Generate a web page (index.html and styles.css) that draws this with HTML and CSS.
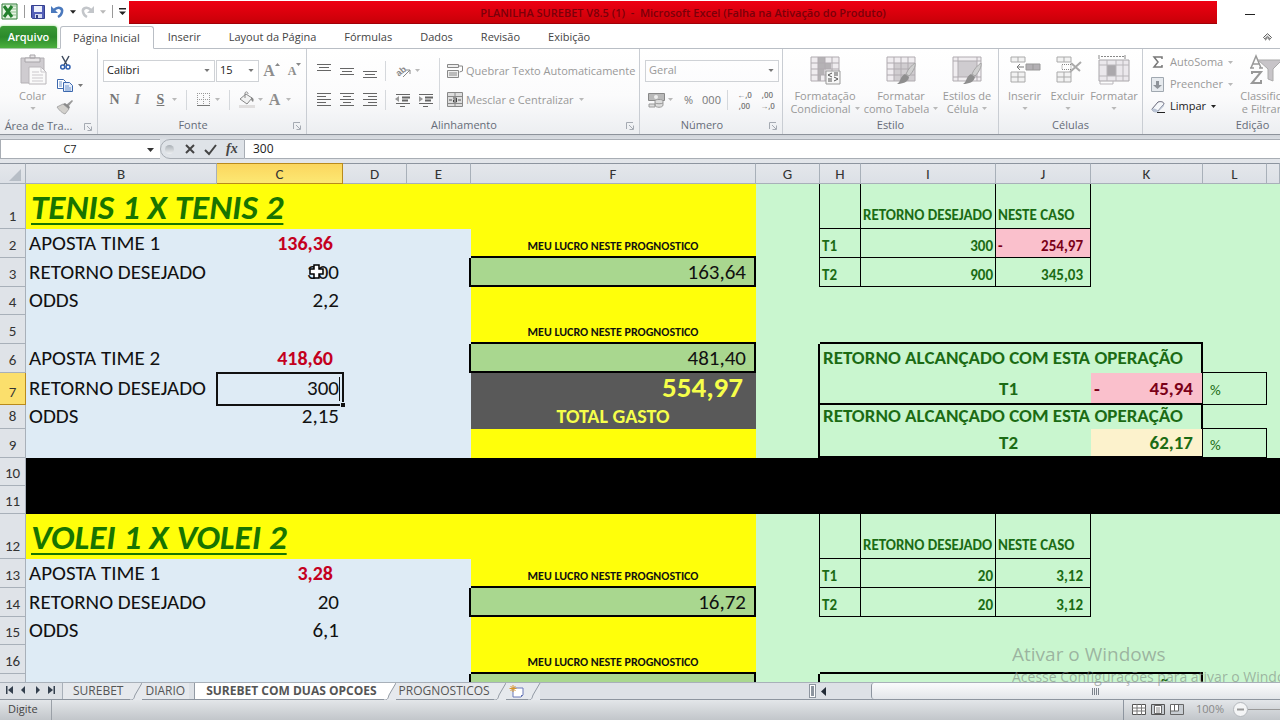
FILE: index.html
```html
<!DOCTYPE html>
<html lang="pt-BR">
<head>
<meta charset="utf-8">
<title>PLANILHA SUREBET V8.5 (1) - Microsoft Excel</title>
<link rel="stylesheet" href="styles.css">
</head>
<body>
<svg class="sprite" aria-hidden="true">
  <symbol id="arrow" viewBox="0 0 7 4"><path d="M0 0h7L3.500 4z" fill="currentColor"/></symbol>
  <symbol id="launch" viewBox="0 0 8 8"><path d="M.5 7V.5H7M3 3l4 4M7.500 3.500v4h-4" fill="none" stroke="#a5aab2"/></symbol>
  <symbol id="grid" viewBox="0 0 30 30"><path d="M1 2h28v24H1z" fill="#efecef"/><path d="M8 2h7v6h6v6h-7v6h-3v6H8z" fill="#b5b2b5"/><path d="M1 2h28v24H1zM1 8h28M1 14h28M1 20h28M8 2v24M15 2v24M22 2v24" fill="none" stroke="#b0abb0"/></symbol>
  <symbol id="brush" viewBox="0 0 20 22"><path d="M19 0c1 3-2 9-6 13l-3-2C12 6 16 2 19 0z" fill="#cfcfcf" stroke="#a5a5a5"/><path d="M9 11l4 3c-1 5-6 7-12 7 4-2 3-8 8-10z" fill="#8e8e8e"/></symbol>
</svg>

<header class="titlebar">
  <div class="quick">
    <svg class="xl" width="17" height="17" viewBox="0 0 17 17"><path d="M1 1h15v15H1z" fill="#e9f5e6" stroke="#2f7d36"/><path d="M9 3h6M9 6h6M9 9h6M9 12h6" stroke="#8cbd8c"/><path d="M3 3l8 11M11 3L3 14" stroke="#23802d" stroke-width="3"/></svg>
    <i class="vbar"></i>
    <button class="q-save" aria-label="Salvar"><svg width="14" height="14" viewBox="0 0 14 14"><path d="M.5.5h13v13h-12l-1-1z" fill="#5460b8" stroke="#35408f"/><path d="M3 1h8v6H3z" fill="#eef1fb"/><path d="M4 9h7v4H4z" fill="#d5daf0"/><path d="M5 10h2v3H5z" fill="#333e82"/></svg></button>
    <button class="q-undo" aria-label="Desfazer"><svg width="13" height="13" viewBox="0 0 13 13"><path d="M3 5c4-4 9-2 8 2-.5 2.500-2 4-4 5" fill="none" stroke="#4b79bd" stroke-width="2.500"/><path d="M0 1v7h7z" fill="#4b79bd"/></svg></button>
    <svg class="dark" width="6" height="4"><use href="#arrow"/></svg>
    <button class="q-redo" aria-label="Refazer"><svg width="13" height="13" viewBox="0 0 13 13"><path d="M10 5C6 1 1 3 2 7c.5 2.500 2 4 4 5" fill="none" stroke="#c3c6ca" stroke-width="2.500"/><path d="M13 1v7H6z" fill="#c3c6ca"/></svg></button>
    <svg class="pale" width="6" height="4"><use href="#arrow"/></svg>
    <i class="vbar"></i>
    <svg class="dark" width="7" height="8" viewBox="0 0 7 8"><path d="M0 0h7v1.500H0zM0 3.500h7L3.500 7z" fill="currentColor"/></svg>
  </div>
  <h1 class="caption">PLANILHA SUREBET V8.5 (1)&nbsp; -&nbsp; Microsoft Excel (Falha na Ativação do Produto)</h1>
  <button class="minimize" aria-label="Minimizar"><svg width="10" height="2"><path d="M0 0h10v1H0z" fill="#222"/></svg></button>
</header>

<nav class="tabs">
  <button class="file">Arquivo</button>
  <button class="tab current">Página Inicial</button>
  <button class="tab">Inserir</button>
  <button class="tab">Layout da Página</button>
  <button class="tab">Fórmulas</button>
  <button class="tab">Dados</button>
  <button class="tab">Revisão</button>
  <button class="tab">Exibição</button>
  <button class="collapse" aria-label="Minimizar a Faixa de Opções"><svg width="9" height="8" viewBox="0 0 9 8"><path d="M.5 4.500L4.500.7l4 3.800-1.300 1.300-2.700-2.500-2.700 2.500zM2 7.300l2.500-2.400L7 7.300" fill="none" stroke="#555"/></svg></button>
</nav>

<section class="ribbon">
  <div class="group g-clip">
    <div class="body">
      <button class="big b-paste"><svg width="30" height="30" viewBox="0 0 30 30"><path d="M3 3h23v25H3z" fill="#cfccd0" stroke="#b3b0b4"/><path d="M7 3h15v4H7zM12 0h5v3h-5z" fill="#e8e6e8" stroke="#a7a4a8"/><path d="M11 12h12l5 5v12H11z" fill="#fafafa" stroke="#b9b6ba"/><path d="M23 12v5h5M14 17h7M14 20h11M14 23h11M14 26h11" fill="none" stroke="#cbc8cc"/></svg><span>Colar</span><svg class="pale" width="6" height="3"><use href="#arrow"/></svg></button>
      <div class="stack">
        <button class="mini" aria-label="Recortar"><svg width="16" height="14" viewBox="0 0 16 14"><path d="M5 0l5 9M12 0L7 9" stroke="#3d4a5e" stroke-width="1.500"/><circle cx="5.700" cy="11" r="2" fill="none" stroke="#2f5fae" stroke-width="1.500"/><circle cx="11" cy="11" r="2" fill="none" stroke="#2f5fae" stroke-width="1.500"/></svg></button>
        <button class="mini" aria-label="Copiar"><svg width="16" height="13" viewBox="0 0 16 13"><path d="M.5.5h6l2 2v7h-8z" fill="#fff" stroke="#3c68ae"/><path d="M6.500 3.500h6l3 3v6h-9z" fill="#e6eefb" stroke="#3c68ae"/><path d="M2 3h3M2 5h3M2 7h3M8 7h4M8 9h6M8 11h6" stroke="#6d93cc"/></svg><svg class="mid" width="5" height="3"><use href="#arrow"/></svg></button>
        <button class="mini" aria-label="Pincel de Formatação"><svg width="16" height="14" viewBox="0 0 16 14"><path d="M15 0l1 1-5 6-2-2z" fill="#999"/><path d="M6 4l6 5-4 5C5 13 2 10 0 7z" fill="#d2d0cc" stroke="#aaa"/><path d="M6 4l6 5 1-2-5-4z" fill="#888"/></svg></button>
      </div>
    </div>
    <h2>Área de Tra...<svg width="8" height="8"><use href="#launch"/></svg></h2>
  </div>

  <div class="group g-font">
    <div class="body rows">
      <div class="line">
        <label class="pick p-font"><select aria-label="Fonte"><option>Calibri</option></select><svg class="mid" width="6" height="3"><use href="#arrow"/></svg></label>
        <label class="pick p-size"><select aria-label="Tamanho"><option>15</option></select><svg class="mid" width="6" height="3"><use href="#arrow"/></svg></label>
        <button class="cell serif">A<svg width="5" height="3" viewBox="0 0 5 3"><path d="M0 3h5L2.500 0z" fill="#888"/></svg></button>
        <button class="cell serif small">A<svg width="5" height="3" viewBox="0 0 5 3"><path d="M0 0h5L2.500 3z" fill="#888"/></svg></button>
      </div>
      <div class="line">
        <button class="cell serif bold">N</button>
        <button class="cell serif ital">I</button>
        <button class="cell serif under">S</button>
        <svg class="pale" width="5" height="3"><use href="#arrow"/></svg>
        <i class="sep spaced"></i>
        <button class="cell" aria-label="Bordas"><svg width="13" height="13" viewBox="0 0 13 13"><path d="M.5 0v12M6.500 0v12M12.500 0v12M0 .5h12M0 6.500h12" stroke="#999" stroke-dasharray="1 1"/><path d="M0 12.500h13" stroke="#777"/></svg></button>
        <svg class="pale" width="5" height="3"><use href="#arrow"/></svg>
        <i class="sep spaced"></i>
        <button class="cell" aria-label="Cor de Preenchimento"><svg width="16" height="16" viewBox="0 0 16 16"><path d="M1 7l6-5 6 4-5 6z" fill="#f2f2f2" stroke="#888"/><path d="M6 6V1c1-2 3-1 3 1" fill="none" stroke="#888"/><path d="M12 5c3 1 3 3 2 5-2-1-2-3-2-5z" fill="#888"/><path d="M0 13h16v3H0z" fill="#e0dede"/></svg></button>
        <svg class="pale" width="5" height="3"><use href="#arrow"/></svg>
        <button class="cell serif">A</button>
        <svg class="pale" width="5" height="3"><use href="#arrow"/></svg>
      </div>
    </div>
    <h2>Fonte<svg width="8" height="8"><use href="#launch"/></svg></h2>
  </div>

  <div class="group g-align">
    <div class="body">
      <div class="rows left">
        <div class="line">
          <button class="cell" aria-label="Alinhar em Cima"><svg width="14" height="14" viewBox="0 0 14 14"><path d="M0 .5h14M2 3.500h10M0 6.500h14" stroke="#666"/></svg></button>
          <button class="cell" aria-label="Alinhar no Meio"><svg width="14" height="14" viewBox="0 0 14 14"><path d="M0 4.500h14M2 7.500h10M0 10.500h14" stroke="#666"/></svg></button>
          <button class="cell" aria-label="Alinhar Embaixo"><svg width="14" height="14" viewBox="0 0 14 14"><path d="M0 7.500h14M2 10.500h10M0 13.500h14" stroke="#666"/></svg></button>
          <i class="sep"></i>
          <button class="cell wide" aria-label="Orientação"><svg width="16" height="14" viewBox="0 0 16 14"><text x="0" y="11" transform="rotate(-40 4 8)" class="ab">ab</text><path d="M7 13l7-7M14 10V6h-4" fill="none" stroke="#888"/></svg><svg class="pale" width="5" height="3"><use href="#arrow"/></svg></button>
        </div>
        <div class="line">
          <button class="cell" aria-label="Esquerda"><svg width="14" height="13" viewBox="0 0 14 13"><path d="M0 .5h14M0 3.500h9M0 6.500h14M0 9.500h9M0 12.500h14" stroke="#666"/></svg></button>
          <button class="cell" aria-label="Centralizar"><svg width="14" height="13" viewBox="0 0 14 13"><path d="M0 .5h14M3 3.500h8M0 6.500h14M3 9.500h8M0 12.500h14" stroke="#666"/></svg></button>
          <button class="cell" aria-label="Direita"><svg width="14" height="13" viewBox="0 0 14 13"><path d="M0 .5h14M5 3.500h9M0 6.500h14M5 9.500h9M0 12.500h14" stroke="#666"/></svg></button>
          <i class="sep"></i>
          <button class="cell" aria-label="Diminuir Recuo"><svg width="16" height="14" viewBox="0 0 16 14"><path d="M1 1.500h14M7 4.500h8M7 7.500h6M1 10.500h14M5 13.500h5" stroke="#666"/><path d="M7 4.500h8M7 7.500h6" stroke="#666" stroke-width="2"/><path d="M0 6l4-3v6z" fill="#999"/></svg></button>
          <button class="cell" aria-label="Aumentar Recuo"><svg width="16" height="14" viewBox="0 0 16 14"><path d="M1 1.500h14M1 10.500h14M5 13.500h5" stroke="#666"/><path d="M7 4.500h8M7 7.500h6" stroke="#666" stroke-width="2"/><path d="M5 6L1 3v6z" fill="#999"/></svg></button>
        </div>
      </div>
      <i class="sep tall"></i>
      <div class="rows">
        <button class="line text"><svg width="16" height="15" viewBox="0 0 16 15"><path d="M.5 1.500h11v3H.5zM.5 7.500h11v7H.5z" fill="#eee" stroke="#888"/><path d="M2 10h8M2 12h8M12 3h3.500v5l-3 1" fill="none" stroke="#888"/></svg>Quebrar Texto Automaticamente</button>
        <button class="line text"><svg width="16" height="15" viewBox="0 0 16 15"><path d="M.5.5h15v14H.5z" fill="#ddd" stroke="#888"/><path d="M1 4.500h15M1 11.500h15M8 0v4M8 11v4" stroke="#888"/><path d="M2 8h3M11 8h3" stroke="#555"/><path d="M6 6h3.500v4H6.500V8h3" fill="none" stroke="#444"/></svg>Mesclar e Centralizar<svg class="pale gapl" width="5" height="3"><use href="#arrow"/></svg></button>
      </div>
    </div>
    <h2>Alinhamento<svg width="8" height="8"><use href="#launch"/></svg></h2>
  </div>

  <div class="group g-num">
    <div class="body rows">
      <div class="line"><label class="pick p-num"><select aria-label="Formato de Número"><option>Geral</option></select><svg class="mid" width="6" height="3"><use href="#arrow"/></svg></label></div>
      <div class="line">
        <button class="cell" aria-label="Moeda"><svg width="17" height="16" viewBox="0 0 17 16"><path d="M.5 1.500h16v7H.5z" fill="#b9b9b9" stroke="#888"/><circle cx="8" cy="5" r="2" fill="#eee"/><path d="M7 9c0-2 8-2 8 0v4c0 3-8 3-8 0zM1 12h6v3H1z" fill="#ddd" stroke="#999"/><path d="M7 11c2 1 6 1 8 0" fill="none" stroke="#999"/></svg></button>
        <svg class="pale" width="5" height="3"><use href="#arrow"/></svg>
        <button class="cell fmt first">%</button>
        <button class="cell fmt">000</button>
        <i class="sep"></i>
        <button class="cell dec"><span>←,0</span><span>,00</span></button>
        <button class="cell dec"><span>,00</span><span>→,0</span></button>
      </div>
    </div>
    <h2>Número<svg width="8" height="8"><use href="#launch"/></svg></h2>
  </div>

  <div class="group g-style">
    <div class="body">
      <button class="big b-cond"><svg width="30" height="30" viewBox="0 0 30 30"><use href="#grid"/><path d="M16 16h14v13H16z" fill="#f7f7f7" stroke="#999"/><path d="M22 18l-4 2 4 2M18 24h4M18 26h4M24 18h4M24 20h4M24 22l4 2-4 2" fill="none" stroke="#555"/></svg><span>Formatação</span><span>Condicional<svg class="pale gapl" width="5" height="3"><use href="#arrow"/></svg></span></button>
      <button class="big b-table"><svg width="30" height="30" viewBox="0 0 30 30"><path d="M1 2h28v24H1z" fill="#f0edf0"/><path d="M8 8h21v18H8z" fill="#d0cdd0"/><path d="M1 2h28v24H1zM1 8h28M1 14h28M1 20h28M8 2v24M15 2v24M22 2v24" fill="none" stroke="#b0abb0"/><use href="#brush" x="10" y="8" width="20" height="22"/></svg><span>Formatar</span><span>como Tabela<svg class="pale gapl" width="5" height="3"><use href="#arrow"/></svg></span></button>
      <button class="big b-cstyle"><svg width="30" height="30" viewBox="0 0 30 30"><path d="M1 2h28v24H1z" fill="#f0edf0" stroke="#b0abb0"/><path d="M6 6h19v16H6z" fill="#cfccd0"/><path d="M1 6h28M1 22h28M6 2v24M25 2v24" stroke="#b0abb0"/><use href="#brush" x="10" y="8" width="20" height="22"/></svg><span>Estilos de</span><span>Célula<svg class="pale gapl" width="5" height="3"><use href="#arrow"/></svg></span></button>
    </div>
    <h2>Estilo</h2>
  </div>

  <div class="group g-cells">
    <div class="body">
      <button class="big"><svg width="30" height="30" viewBox="0 0 30 30"><path d="M1 2h14v5H1zM8 2v5M1 17h14v10H1zM1 22h14M8 17v10" fill="#f2f2f2" stroke="#aaa"/><path d="M16 9h14v6H16zM23 9v6" fill="#b3b0b4" stroke="#999"/><path d="M7 12h7M10 9l-3 3 3 3" fill="none" stroke="#777"/></svg><span>Inserir</span><svg class="pale" width="6" height="3"><use href="#arrow"/></svg></button>
      <button class="big"><svg width="30" height="30" viewBox="0 0 30 30"><path d="M4 2h14v5H4zM11 2v5M4 17h14v10H4zM4 22h14M11 17v10" fill="#f2f2f2" stroke="#aaa"/><path d="M9 9.500h9v5H9z" fill="none" stroke="#888" stroke-dasharray="1 1"/><path d="M18 8l9 8M28 7L17 17" stroke="#aaa" stroke-width="2"/></svg><span>Excluir</span><svg class="pale" width="6" height="3"><use href="#arrow"/></svg></button>
      <button class="big b-format"><svg width="32" height="30" viewBox="0 0 32 30"><path d="M1 0v4M27 0v4" stroke="#888"/><path d="M3 1.500h23" stroke="#888" stroke-dasharray="2 1"/><path d="M1 5h30v21H1z" fill="#ebe8ec" stroke="#a9a6aa"/><path d="M9 10h9v11H9z" fill="#aba8ac"/><path d="M1 10h30M1 21h30M9 5v21M18 5v21M25 5v21M2 26v3h13v-3" fill="none" stroke="#b9b6ba"/></svg><span>Formatar</span><svg class="pale" width="6" height="3"><use href="#arrow"/></svg></button>
    </div>
    <h2>Células</h2>
  </div>

  <div class="group g-edit">
    <div class="body">
      <div class="tools">
        <button class="tool"><svg width="14" height="14" viewBox="0 0 14 14"><path d="M11 4V2H3l4 5-4 5h8v-2" fill="none" stroke="#777" stroke-width="1.500"/></svg>AutoSoma<svg class="pale gapl" width="5" height="3"><use href="#arrow"/></svg></button>
        <button class="tool"><svg width="14" height="15" viewBox="0 0 14 15"><path d="M.5.5h12v14H.5z" fill="#e6eaee" stroke="#a0a8b0"/><path d="M5 4h3v4h3l-4.500 4L2 8h3z" fill="#8e9399"/></svg>Preencher<svg class="pale gapl" width="5" height="3"><use href="#arrow"/></svg></button>
        <button class="tool on"><svg width="14" height="13" viewBox="0 0 14 13"><path d="M1 9l6-7c3-1 6 0 6 2l-6 7c-3 1-6 0-6-2z" fill="#f5f7fa" stroke="#667"/><path d="M1 9c2-1 5 0 6 2l6-7v2l-6 6c-3 1-6 0-6-3z" fill="#b9c3d4"/><path d="M6 12.500h8" stroke="#222"/></svg>Limpar<svg class="gapl" width="5" height="3"><use href="#arrow"/></svg></button>
      </div>
      <button class="big b-sort"><svg width="34" height="30" viewBox="0 0 34 30"><path d="M2 13L7 1l5 12M4 9h6M1 13h4M10 13h4" fill="none" stroke="#999" stroke-width="1.500"/><path d="M3 19v-2h9L3 28h9v-3" fill="none" stroke="#999" stroke-width="2"/><path d="M9 5h24L24 14v12l-5-2V14z" fill="#c7c4c8" stroke="#aaa"/></svg><span>Classificar</span><span>e Filtrar<svg class="pale gapl" width="5" height="3"><use href="#arrow"/></svg></span></button>
    </div>
    <h2>Edição</h2>
  </div>
</section>

<section class="formula">
  <label class="namebox"><input value="C7" aria-label="Caixa de Nome"><svg width="7" height="4"><use href="#arrow"/></svg></label>
  <div class="fx">
    <i class="knob"></i>
    <button aria-label="Cancelar"><svg width="10" height="10" viewBox="0 0 10 10"><path d="M1 1l8 8M9 1L1 9" stroke="#444" stroke-width="2"/></svg></button>
    <button aria-label="Inserir"><svg width="13" height="11" viewBox="0 0 13 11"><path d="M1 6l4 4 7-9" fill="none" stroke="#444" stroke-width="2"/></svg></button>
    <button class="fn"><span>fx</span></button>
  </div>
  <input class="entry" value="300" aria-label="Barra de Fórmulas">
</section>

<main class="sheet">
  <table>
    <colgroup><col class="c0"><col class="cB"><col class="cC"><col class="cD"><col class="cD"><col class="cF"><col class="cD"><col class="cH"><col class="cI"><col class="cJ"><col class="cK"><col class="cD"><col></colgroup>
    <thead><tr><th class="corner"><svg width="12" height="12" viewBox="0 0 12 12"><path d="M12 0v12H0z" fill="#b7bec6"/></svg></th><th>B</th><th class="hot">C</th><th>D</th><th>E</th><th>F</th><th>G</th><th>H</th><th>I</th><th>J</th><th>K</th><th>L</th><th></th></tr></thead>
    <tbody>
      <tr class="h45"><th>1</th><td colspan="5" class="y title">TENIS 1 X TENIS 2</td><td class="r1"></td><td class="r1 b1"></td><td class="r1 b1 s">RETORNO DESEJADO</td><td class="r1 b1 s">NESTE CASO</td><td></td><td></td><td></td></tr>
      <tr class="h29"><th>2</th><td class="a">APOSTA TIME 1</td><td class="a red">136,36</td><td class="a"></td><td class="a"></td><td class="y b2 luc">MEU LUCRO NESTE PROGNOSTICO</td><td class="r1"></td><td class="r1 b1 s">T1</td><td class="r1 b1 s num">300</td><td class="r1 b1 s acc neg"><div><span>-</span><span>254,97</span></div></td><td></td><td></td><td></td></tr>
      <tr class="h29"><th>3</th><td class="a">RETORNO DESEJADO</td><td class="a val cursor">300<svg width="15" height="15" viewBox="0 0 15 15"><path d="M5 1h5v4h4v5h-4v4H5v-4H1V5h4z" fill="#fff" stroke="#000" stroke-width="1.500"/></svg></td><td class="a"></td><td class="a r2"></td><td class="gr">163,64</td><td class="r1"></td><td class="r1 b1 s">T2</td><td class="r1 b1 s num">900</td><td class="r1 b1 s acc"><div><span></span><span>345,03</span></div></td><td></td><td></td><td></td></tr>
      <tr class="h28"><th>4</th><td class="a">ODDS</td><td class="a val">2,2</td><td class="a"></td><td class="a"></td><td class="y"></td><td></td><td></td><td></td><td></td><td></td><td></td><td></td></tr>
      <tr class="h29"><th>5</th><td class="a"></td><td class="a"></td><td class="a"></td><td class="a"></td><td class="y b2 luc">MEU LUCRO NESTE PROGNOSTICO</td><td></td><td colspan="4" class="b2"></td><td></td><td></td></tr>
      <tr class="h29"><th>6</th><td class="a">APOSTA TIME 2</td><td class="a red">418,60</td><td class="a"></td><td class="a r2"></td><td class="gr">481,40</td><td class="r2"></td><td colspan="4" class="r2 ret">RETORNO ALCANÇADO COM ESTA OPERAÇÃO</td><td class="b1"></td><td></td></tr>
      <tr class="h32"><th class="hot">7</th><td class="a">RETORNO DESEJADO</td><td class="a edit"><input value="300" aria-label="C7"><i class="caret"></i><i class="handle"></i></td><td class="a"></td><td class="a"></td><td class="total sum">554,97</td><td class="r2"></td><td class="b2"></td><td class="b2"></td><td class="b2 ret">T1</td><td class="r1 b2 ret acc neg"><div><span>-</span><span>45,94</span></div></td><td class="r1 b1 pct">%</td><td></td></tr>
      <tr class="h24"><th>8</th><td class="a">ODDS</td><td class="a val">2,15</td><td class="a"></td><td class="a"></td><td class="total">TOTAL GASTO</td><td class="r2"></td><td colspan="4" class="r2 ret">RETORNO ALCANÇADO COM ESTA OPERAÇÃO</td><td class="b1"></td><td></td></tr>
      <tr class="h29"><th>9</th><td class="a"></td><td class="a"></td><td class="a"></td><td class="a"></td><td class="y"></td><td class="r2"></td><td class="b2"></td><td class="b2"></td><td class="b2 ret">T2</td><td class="r1 b2 ret acc cream"><div><span></span><span>62,17</span></div></td><td class="r1 b1 pct">%</td><td></td></tr>
      <tr class="h28"><th>10</th><td colspan="12" class="k"></td></tr>
      <tr class="h28"><th>11</th><td colspan="12" class="k"></td></tr>
      <tr class="h45"><th>12</th><td colspan="5" class="y title">VOLEI 1 X VOLEI 2</td><td class="r1"></td><td class="r1 b1"></td><td class="r1 b1 s">RETORNO DESEJADO</td><td class="r1 b1 s">NESTE CASO</td><td></td><td></td><td></td></tr>
      <tr class="h29"><th>13</th><td class="a">APOSTA TIME 1</td><td class="a red">3,28</td><td class="a"></td><td class="a"></td><td class="y b2 luc">MEU LUCRO NESTE PROGNOSTICO</td><td class="r1"></td><td class="r1 b1 s">T1</td><td class="r1 b1 s num">20</td><td class="r1 b1 s acc"><div><span></span><span>3,12</span></div></td><td></td><td></td><td></td></tr>
      <tr class="h29"><th>14</th><td class="a">RETORNO DESEJADO</td><td class="a val">20</td><td class="a"></td><td class="a r2"></td><td class="gr">16,72</td><td class="r1"></td><td class="r1 b1 s">T2</td><td class="r1 b1 s num">20</td><td class="r1 b1 s acc"><div><span></span><span>3,12</span></div></td><td></td><td></td><td></td></tr>
      <tr class="h28"><th>15</th><td class="a">ODDS</td><td class="a val">6,1</td><td class="a"></td><td class="a"></td><td class="y"></td><td></td><td></td><td></td><td></td><td></td><td></td><td></td></tr>
      <tr class="h29"><th>16</th><td class="a"></td><td class="a"></td><td class="a"></td><td class="a"></td><td class="y b2 luc">MEU LUCRO NESTE PROGNOSTICO</td><td></td><td colspan="4" class="b2"></td><td></td><td></td></tr>
      <tr class="h29"><th></th><td class="a"></td><td class="a"></td><td class="a"></td><td class="a r2"></td><td class="gr"></td><td class="r2"></td><td colspan="4" class="r2 ret">RETORNO ALCANÇADO COM ESTA OPERAÇÃO</td><td></td><td></td></tr>
    </tbody>
  </table>
</main>

<footer class="sheetbar">
  <div class="nav">
    <button aria-label="Primeira"><svg width="7" height="8" viewBox="0 0 7 8"><path d="M0 0h1.500v8H0zM7 0v8L2 4z" fill="#333f4d"/></svg></button>
    <button aria-label="Anterior"><svg width="7" height="8" viewBox="0 0 7 8"><path d="M5 0v8L1 4z" fill="#333f4d"/></svg></button>
    <button aria-label="Próxima"><svg width="7" height="8" viewBox="0 0 7 8"><path d="M2 0v8l4-4z" fill="#333f4d"/></svg></button>
    <button aria-label="Última"><svg width="7" height="8" viewBox="0 0 7 8"><path d="M5.500 0H7v8H5.500zM0 0v8l5-4z" fill="#333f4d"/></svg></button>
  </div>
  <button class="stab first">SUREBET</button>
  <svg class="slash" width="12" height="17" viewBox="0 0 12 17"><path d="M0 17c4 0 4-2 5-5l7-12" fill="none" stroke="#929aa4"/></svg>
  <button class="stab">DIARIO</button>
  <button class="stab active">SUREBET COM DUAS OPCOES</button>
  <svg class="slash" width="12" height="17" viewBox="0 0 12 17"><path d="M0 0h12L5 12c-1 3-1 5-5 5z" fill="#fff"/><path d="M0 17c4 0 4-2 5-5l7-12" fill="none" stroke="#929aa4"/></svg>
  <button class="stab">PROGNOSTICOS</button>
  <svg class="slash" width="12" height="17" viewBox="0 0 12 17"><path d="M0 17c4 0 4-2 5-5l7-12" fill="none" stroke="#929aa4"/></svg>
  <button class="stab" aria-label="Inserir Planilha"><svg width="15" height="13" viewBox="0 0 15 13"><path d="M4 3h10v7l-2 2H4z" fill="#fff" stroke="#6878b8"/><path d="M12 12l2-2h-2z" fill="#6878b8"/><path d="M4 0v7M.5 3.500h7M1.500 1l5 5M6.500 1l-5 5" stroke="#d9962b"/></svg></button>
  <svg class="slash" width="12" height="17" viewBox="0 0 12 17"><path d="M0 17c4 0 4-2 5-5l7-12" fill="none" stroke="#929aa4"/></svg>
  <div class="scroll">
    <i class="split"></i>
    <button class="sleft" aria-label="Rolar para a esquerda"><svg width="5" height="9" viewBox="0 0 5 9"><path d="M5 0v9L0 4.500z" fill="#222b36"/></svg></button>
    <div class="thumb"><svg width="8" height="7" viewBox="0 0 8 7"><path d="M.5 0v7M2.500 0v7M4.500 0v7M6.500 0v7" stroke="#7b828b"/></svg></div>
  </div>
</footer>

<footer class="status">
  <span class="mode">Digite</span>
  <div class="views">
    <button aria-label="Normal"><svg width="14" height="11" viewBox="0 0 14 11"><path d="M.5.5h13v10H.5z" fill="#fff" stroke="#555"/><path d="M0 4h14M0 7h14M5 0v11M9.500 0v11" stroke="#777"/></svg></button>
    <button aria-label="Layout da Página"><svg width="14" height="11" viewBox="0 0 14 11"><path d="M.5.5h13v10H.5z" fill="#c9ced3" stroke="#555"/><path d="M3.500 1.500h7v8h-7z" fill="#fff" stroke="#666"/><path d="M5 4h4M5 6h4M5 8h4" stroke="#888"/></svg></button>
    <button aria-label="Quebras de Página"><svg width="14" height="11" viewBox="0 0 14 11"><path d="M.5.5h13v10H.5z" fill="#c9ced3" stroke="#666"/><path d="M1 1h7v6H1z" fill="#fff"/><path d="M4.500 0v7M8.500 0v7H0" fill="none" stroke="#666"/></svg></button>
  </div>
  <span class="zoom">100%</span>
  <button class="minus" aria-label="Reduzir"><svg width="15" height="15" viewBox="0 0 15 15"><circle cx="7.500" cy="7.500" r="7" fill="#f4f5f6" stroke="#b4b8bd"/><path d="M4 7.500h7" stroke="#999" stroke-width="2"/></svg></button>
  <i class="rail"></i>
</footer>

<aside class="watermark"><p class="wm1">Ativar o Windows</p><p class="wm2">Acesse Configurações para ativar o Windows.</p></aside>
</body>
</html>
```
FILE: styles.css
```css
* { box-sizing: border-box; }
body { margin: 0; height: 100vh; display: flex; flex-direction: column; overflow: hidden; position: relative; background: #fff; font: 11px/14px "Open Sans", "Noto Sans", sans-serif; color: #444; }
button, input, select { font: inherit; color: inherit; border: 0; background: none; padding: 0; margin: 0; border-radius: 0; }
button { display: flex; align-items: center; justify-content: center; white-space: nowrap; }
svg { display: block; flex: none; overflow: visible; }
h1, h2, p { margin: 0; font-size: inherit; font-weight: normal; }
.sprite { position: absolute; width: 0; height: 0; }
.dark { color: #222; }
.mid { color: #777; }
.pale { color: #b9b9b9; }
.gapl { margin-left: 4px; }

.titlebar { display: flex; flex: none; height: 24px; padding-top: 1px; }
.quick { display: flex; flex: none; align-items: center; width: 129px; padding: 0 3px 2px 1px; justify-content: space-between; }
.vbar { width: 1px; height: 13px; background: #999; }
.caption { flex: 1; padding-left: 20px; text-align: center; line-height: 23px; font-weight: 600; color: #7a000a; background: linear-gradient(#ee0012, #d8000c 60%, #c80008); border-bottom: 1px solid #a00008; overflow: hidden; white-space: nowrap; }
.minimize { flex: none; width: 63px; padding: 4px 0 0 3px; }

.tabs { display: flex; flex: none; height: 25px; padding-top: 2px; border-bottom: 1px solid #b9bec5; }
.file { width: 57px; height: 22px; border-radius: 3px 3px 0 0; color: #fff; font-weight: 600; background: linear-gradient(#3a9a35, #2c8a2b 50%, #4bb03e); box-shadow: 0 0 3px #8fdc7f; }
.tab { padding: 0 14px; height: 22px; }
.tab.current { margin-left: 3px; padding: 0 13px 0 12px; height: 23px; border: 1px solid #b9bec5; border-bottom-color: #fff; border-radius: 3px 3px 0 0; background: #fff; }
.collapse { margin-left: auto; width: 26px; }

.ribbon { display: flex; flex: none; height: 86px; background: linear-gradient(#fff, #fbfbfc 55%, #eceef1); border-bottom: 1px solid #8d939b; color: #999; overflow: hidden; }
.group { display: flex; flex-direction: column; flex: none; border-right: 1px solid #c9cdd3; }
.body { display: flex; flex: 1; }
.group h2 { position: relative; height: 17px; line-height: 16px; text-align: center; color: #666c78; padding-right: 20px; }
.group h2 svg { position: absolute; right: 5px; top: 5px; }
.g-font h2, .g-align h2, .g-num h2 { padding-right: 18px; }
.g-clip { width: 98px; }
.g-font { width: 209px; }
.g-align { width: 333px; }
.g-num { width: 143px; }
.g-style { width: 216px; }
.g-cells { width: 144px; }
.g-edit { width: 220px; }
.group.g-style h2, .group.g-cells h2, .group.g-edit h2 { padding: 0; }
.g-style .body { padding-left: 4px; }
.g-cells .body { padding-left: 4px; }

.big { flex-direction: column; justify-content: flex-start; width: 43px; padding-top: 6px; line-height: 13px; }
.big > svg:first-child { margin-bottom: 4px; }
.big > span { display: flex; align-items: center; }
.big > .pale { margin-top: 5px; }
.b-paste { width: 65px; }
.b-cond { width: 76px; }
.b-table { width: 76px; }
.b-cstyle { width: 56px; }
.b-format { width: 50px; }
.b-sort { width: 58px; margin-left: 8px; }
.stack { padding-top: 3px; }
.mini { height: 22px; width: 26px; justify-content: flex-start; gap: 5px; margin-left: -8px; }

.rows { display: flex; flex-direction: column; padding-top: 7px; }
.body.rows { padding-left: 5px; }
.line { display: flex; align-items: center; height: 29px; }
.text { justify-content: flex-start; gap: 3px; }
.text .gapl { margin-left: 2px; }
.cell { width: 23px; height: 22px; }
.wide { width: 40px; gap: 3px; justify-content: flex-start; padding-left: 5px; }
.sep { width: 1px; height: 20px; background: #d5d8dc; margin: 0 5px 0 4px; }
.spaced { margin: 0 5px 0 9px; }
.tall { height: 52px; margin: 9px 7px 0 0; }
.g-align .left { width: 132px; padding-left: 5px; }
.serif { font: bold 16px/20px "Liberation Serif", serif; color: #8d8d8d; }
.serif svg { align-self: flex-start; margin-top: 3px; }
.serif.small { font-size: 12px; line-height: 20px; }
.serif.bold, .serif.under { font-size: 14px; color: #777; }
.serif.ital { font-size: 14px; font-style: italic; }
.under { text-decoration: underline; }
.ab { font: bold 9px "Liberation Sans", sans-serif; fill: #888; }
.fmt { color: #777; }
.fmt.first { margin-left: 4px; }
.dec { flex-direction: column; font-size: 8px; line-height: 11px; font-weight: 600; color: #777; }
.pick { position: relative; display: flex; align-items: center; height: 22px; border: 1px solid #cfd2d6; background: #fff; }
.pick select { appearance: none; width: 100%; height: 20px; padding: 0 0 2px 3px; color: #222; outline: 0; }
.pick svg { position: absolute; right: 4px; }
.p-font { width: 112px; }
.p-size { width: 43px; margin: 0 1px; }
.p-num { width: 134px; background: none; }
.p-num select { color: #999; }

.tools { width: 86px; padding: 2px 0 0 8px; }
.tool { height: 22px; gap: 5px; }
.tool .gapl { margin-left: 0; }
.tool.on { color: #222; }

.formula { display: flex; flex: none; height: 28px; padding: 4px 0; background: linear-gradient(#cfd3d9, #dde1e6 5px, #e3e6ea); }
.namebox { position: relative; display: flex; width: 160px; background: #fff; border: 1px solid #a8adb4; border-width: 1px 0 1px 1px; }
.namebox input { width: 138px; text-align: center; color: #222; outline: 0; }
.namebox svg { position: absolute; right: 6px; top: 8px; color: #333; }
.fx { display: flex; align-items: center; width: 85px; gap: 9px; padding-left: 4px; background: #dfe3e8; border: 1px solid #a8adb4; border-radius: 10px 0 0 10px; }
.knob { width: 9px; height: 9px; border-radius: 5px; background: linear-gradient(#aab0b6, #eef0f2); margin-right: 2px; }
.fn { font: italic bold 14px/16px "Liberation Serif", serif; }
.entry { flex: 1; padding-left: 8px; background: #fff; border-top: 1px solid #a8adb4; border-bottom: 1px solid #a8adb4; color: #222; outline: 0; min-width: 0; font-size: 12px; }

.sheet { flex: 1; min-height: 0; overflow: hidden; background: #c9f6cf; }
table { table-layout: fixed; width: 100%; border-collapse: separate; border-spacing: 0; font-family: Carlito, Calibri, Lato, sans-serif; }
.c0 { width: 26px; } .cB { width: 191px; } .cC { width: 126px; } .cD { width: 64px; } .cF { width: 285px; }
.cH { width: 41px; } .cI { width: 135px; } .cJ { width: 95px; } .cK { width: 112px; }
th { padding: 0; font-weight: normal; font-size: 15px; line-height: 18px; color: #333; background: #dfe3e8; border: 0 solid #a8b0b9; border-width: 0 1px 1px 0; vertical-align: bottom; }
tbody th { padding-bottom: 3px; }
thead th { height: 21px; border-top: 1px solid #8d959f; vertical-align: middle; background: linear-gradient(#e4e7eb, #dce0e6); }
thead th.corner svg { margin: 3px 0 0 9px; }
thead th.hot { background: linear-gradient(#fbd65e, #fce873); border-color: #b98a1c; }
tbody th.hot { background: #fbdf6c; border-color: #b98a1c; }
td { padding: 0 4px 2px 3px; font-size: 21px; line-height: 22px; color: #111; white-space: nowrap; overflow: hidden; border: 0 solid #000; }
.h45 { height: 45px; } .h32 { height: 32px; } .h29 { height: 29px; } .h28 { height: 28px; } .h24 { height: 24px; }
.r1 { border-right-width: 1px; } .r2 { border-right-width: 2px; }
.b1 { border-bottom-width: 1px; } .b2 { border-bottom-width: 2px; }
.a { background: #deebf5; }
.y { background: #ffff0a; }
.k { background: #000; }
.title { padding: 0 0 0 5px; font-size: 35px; line-height: 42px; font-weight: bold; font-style: italic; color: #187400; text-decoration: underline 2px; text-underline-offset: 4px; }
.val { text-align: right; }
.red { text-align: right; padding-right: 10px; font-size: 20px; font-weight: bold; color: #c4001e; }
.luc { padding-bottom: 0; text-align: center; font-size: 12px; line-height: 20px; font-weight: bold; vertical-align: bottom; }
.gr { background: #a9d78f; border-width: 0 2px 2px 0; text-align: right; padding: 0 8px 0 0; }
.total { background: #595959; color: #f6ff4a; text-align: center; font-size: 20px; font-weight: bold; }
.sum { font-size: 29px; line-height: 28px; text-align: right; padding: 0 13px 0 0; vertical-align: top; overflow: visible; }
.s { padding: 0 2px; font-size: 15px; line-height: 22px; font-weight: bold; color: #1b6b14; vertical-align: bottom; }
.h45 .s { line-height: 26px; }
.num { text-align: right; }
.ret { padding-left: 3px; font-size: 19px; font-weight: bold; color: #1b6b14; }
.ret.b2 { padding-bottom: 0; padding-top: 1px; }
.acc div { display: flex; justify-content: space-between; padding-right: 5px; }
td.neg { background: #fac0cc; color: #7a0018; }
.cream { background: #fcf2cc; }
.pct { padding: 3px 0 0 7px; font-size: 15px; line-height: 20px; color: #1b6b14; }
.cursor { position: relative; }
.cursor svg { position: absolute; left: 92px; top: 6px; }
.edit { position: relative; overflow: visible; padding: 0; }
.edit input { display: block; width: 100%; height: 32px; padding: 0 4px 2px 0; text-align: right; outline: 2px solid #111; outline-offset: -1px; }
.caret { position: absolute; right: 3px; top: 4px; width: 1px; height: 24px; background: #111; }
.handle { position: absolute; right: -2px; bottom: -2px; width: 5px; height: 5px; background: #111; border: solid #deebf5; border-width: 1px 0 0 1px; }

.sheetbar { display: flex; flex: none; height: 18px; background: #dde1e6; border-top: 1px solid #a8b0b9; border-bottom: 1px solid #8d959f; font-size: 12px; line-height: 16px; }
.nav { display: flex; width: 63px; gap: 7px; padding: 0 0 2px 6px; border-right: 1px solid #a8b0b9; }
.stab { padding: 0 4px 0 3px; background: #e6e9ed; color: #555; }
.stab.first { padding: 0 7px 0 10px; }
.stab.active { padding: 0 7px 0 11px; background: #fff; font-weight: bold; border-left: 1px solid #929aa4; margin-left: 5px; }
.slash { background: #e6e9ed; }
.scroll { display: flex; flex: 0 0 471px; margin-left: auto; }
.split { width: 7px; margin: 1px 0; border: 2px solid #fff; outline: 1px solid #8d959f; outline-offset: -1px; background: #8d959f; }
.sleft { width: 55px; justify-content: flex-start; padding-left: 5px; }
.thumb { flex: 1; display: flex; align-items: center; padding-left: 220px; border-left: 1px solid #8d959f; border-radius: 3px 0 0 3px; background: linear-gradient(#fafbfc, #e3e6ea); }

.status { display: flex; flex: none; align-items: center; height: 20px; background: linear-gradient(#e3e6e9, #c2c6ca); }
.mode { padding: 0 13px 2px 8px; border-right: 1px solid #9aa0a7; line-height: 18px; }
.views { display: flex; gap: 5px; margin-left: auto; padding: 0 0 2px 8px; border-left: 1px solid #8d959f; height: 20px; }
.zoom { margin-left: 12px; padding-bottom: 2px; color: #888; }
.minus { margin: 0 0 2px 9px; }
.rail { width: 32px; height: 1px; margin-bottom: 2px; background: #999; }

.watermark { position: absolute; right: 0; bottom: 33px; width: 268px; overflow: hidden; white-space: nowrap; color: rgba(125, 135, 128, .6); pointer-events: none; }
.wm1 { font-size: 19px; line-height: 26px; }
.wm2 { font-size: 14px; line-height: 20px; }
```
